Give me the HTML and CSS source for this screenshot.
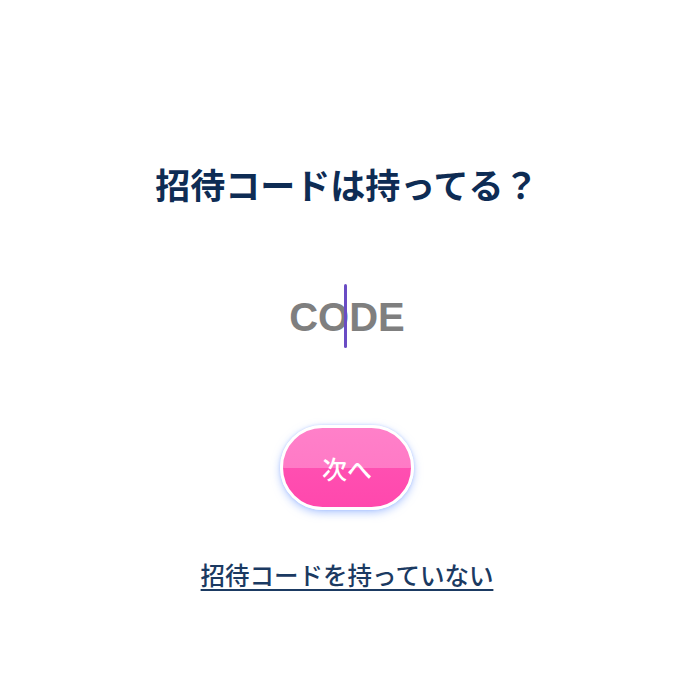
FILE: index.html
```html
<!DOCTYPE html>
<html lang="ja">
<head>
<meta charset="utf-8">
<link rel="stylesheet" href="styles.css">
</head>
<body>
<main class="page">
  <h1 class="title">招待コードは持ってる？</h1>
  <div class="code-field">
    <span class="placeholder">CODE</span>
    <span class="caret"></span>
  </div>
  <button class="next-btn" type="button">次へ</button>
  <a class="no-code" href="#">招待コードを持っていない</a>
</main>
</body>
</html>
```

FILE: styles.css
```css
html, body {
  margin: 0;
  padding: 0;
  background: #ffffff;
}
.page {
  width: 694px;
  height: 700px;
  display: flex;
  flex-direction: column;
  align-items: center;
  box-sizing: border-box;
  padding-top: 164px;
  font-family: "Noto Sans CJK JP", "Noto Sans", sans-serif;
}
.title {
  margin: 0;
  font-size: 35px;
  line-height: 40px;
  font-weight: 700;
  color: #0e2c54;
  letter-spacing: 0;
}
.code-field {
  position: relative;
  margin-top: 80px;
  height: 64px;
  width: 300px;
  display: flex;
  align-items: center;
  justify-content: center;
}
.placeholder {
  font-family: "Liberation Sans", Arial, sans-serif;
  font-weight: 700;
  font-size: 40px;
  line-height: 64px;
  color: #7f7f7f;
  padding-top: 2px;
}
.caret {
  position: absolute;
  left: 147px;
  top: 0;
  width: 3px;
  height: 64px;
  border-radius: 2px;
  background: #6a4cc4;
}
.next-btn {
  margin-top: 77px;
  width: 134px;
  height: 85px;
  border-radius: 43px;
  border: 3px solid #ffffff;
  background: linear-gradient(to bottom, #ff80c9 0%, #ff7ac6 50%, #ff4fb1 50%, #ff48ad 100%);
  box-shadow: 0 3px 8px rgba(120, 160, 255, 0.55), 0 0 3px rgba(120, 160, 255, 0.4);
  color: #ffffff;
  font-family: "Noto Sans CJK JP", sans-serif;
  font-size: 25px;
  font-weight: 500;
  padding: 0;
  box-sizing: border-box;
}
.no-code {
  margin-top: 50px;
  font-size: 24.5px;
  line-height: 30px;
  font-weight: 500;
  color: #1b3a62;
  text-decoration: underline;
  text-underline-offset: 4px;
  text-decoration-thickness: 2px;
}
```
